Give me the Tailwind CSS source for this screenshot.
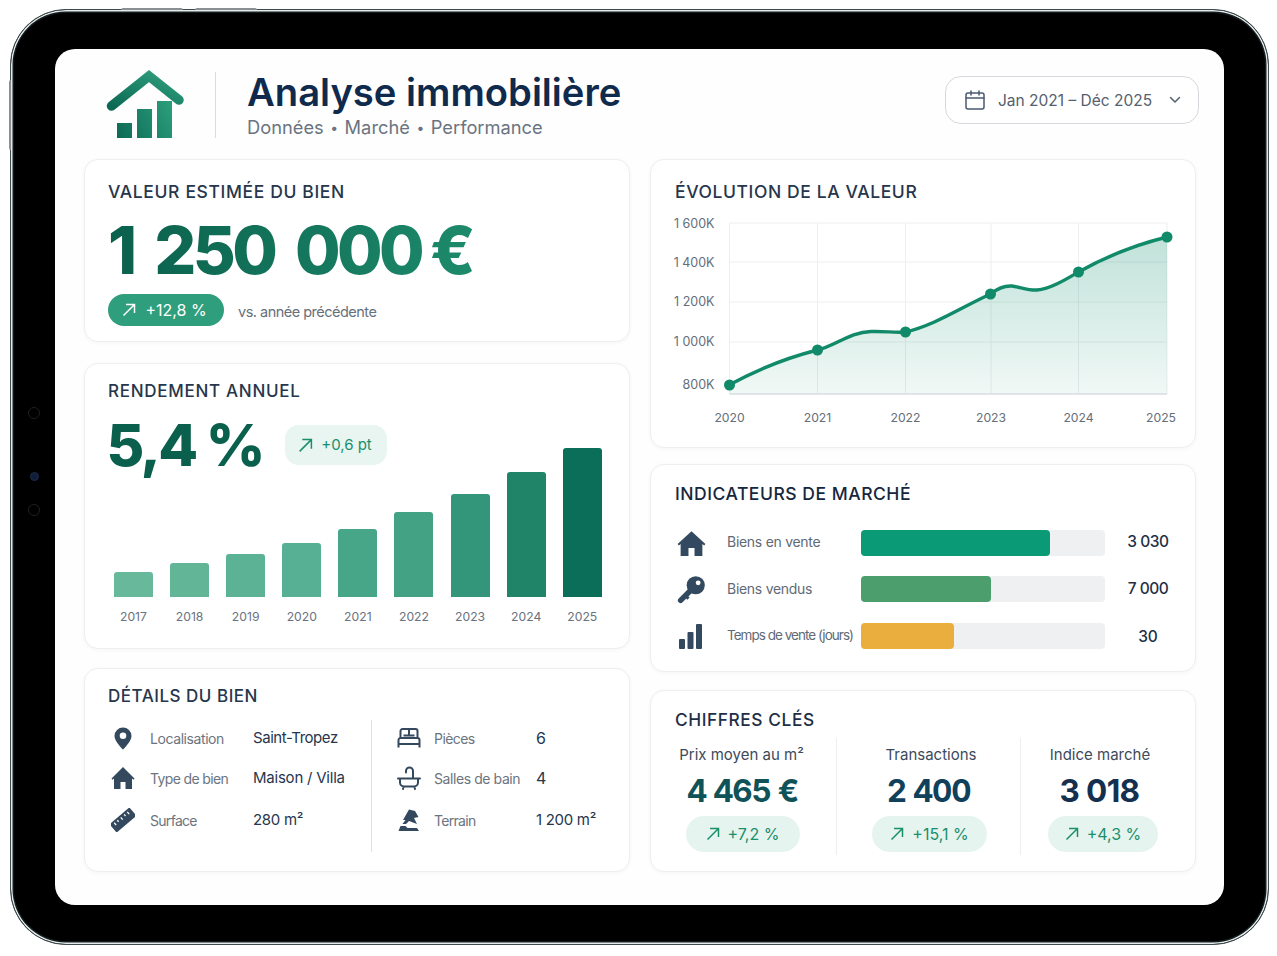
<!DOCTYPE html>
<html lang="fr">
<head>
<meta charset="utf-8">
<script src="https://cdn.jsdelivr.net/npm/@tailwindcss/browser@4"></script>
<title>Analyse immobilière</title>
</head>
<body class="bg-white font-['Inter','Liberation_Sans',sans-serif] text-[#1e2f45] antialiased">
<div class="w-[1277px] h-[956px] overflow-hidden pt-[9px] pl-[10px]">
  <div class="relative w-[1259px] h-[936px] rounded-[56px] bg-black border border-[#3d4a4e] shadow-[inset_0_0_0_1.5px_#e4eaea,inset_0_0_0_3px_#141c1e] pt-[39px] pl-[44px]">
    <div class="absolute left-[110px] -top-[2px] w-[62px] h-[2px] rounded-t bg-[#8a9092]"></div>
    <div class="absolute left-[184px] -top-[2px] w-[62px] h-[2px] rounded-t bg-[#8a9092]"></div>
    <div class="absolute -left-[2px] top-[70px] w-[2px] h-[70px] rounded-l bg-[#8a9092]"></div>
    <div class="absolute left-[17px] top-[397px] w-[12px] h-[12px] rounded-full border border-[#1c2022]"></div>
    <div class="absolute left-[19px] top-[462px] w-[9px] h-[9px] rounded-full bg-[#0f1f3a] border border-[#1c2c48]"></div>
    <div class="absolute left-[17px] top-[494px] w-[12px] h-[12px] rounded-full border border-[#1c2022]"></div>

    <div class="w-[1169px] h-[856px] rounded-[20px] bg-[#fefefe] pl-[29px]">
      <!-- En-tête -->
      <header class="flex items-start h-[110px] w-[1115px]">
        <svg class="ml-[21px] mt-[19px] shrink-0" width="80" height="72" viewBox="105 68 80 72">
          <defs>
            <linearGradient id="logoG" x1="0" y1="1" x2="1" y2="0"><stop offset="0" stop-color="#0c6a54"/><stop offset="1" stop-color="#2f9f7d"/></linearGradient>
            <linearGradient id="logoB" gradientUnits="userSpaceOnUse" x1="117" y1="138" x2="172" y2="110"><stop offset="0" stop-color="#0c6a54"/><stop offset="1" stop-color="#2a9c7a"/></linearGradient>
          </defs>
          <path d="M111.500 106 L149 76 L179 100" fill="none" stroke="url(#logoG)" stroke-width="9.500" stroke-linecap="round" stroke-linejoin="miter"/>
          <rect x="117" y="123" width="15" height="15" fill="url(#logoB)"/>
          <rect x="137" y="109" width="15" height="29" fill="url(#logoB)"/>
          <rect x="157" y="101" width="15" height="37" fill="url(#logoB)"/>
        </svg>
        <div class="ml-[30px] mt-[23px] w-px h-[66px] bg-[#d9dcdf] shrink-0"></div>
        <div class="ml-[31px] mt-[19px]">
          <h1 class="text-[38.200px] leading-[48px] font-semibold text-[#0f2a4d] whitespace-nowrap">Analyse immobilière</h1>
          <p class="-mt-[1px] text-[18.300px] leading-[24px] text-[#6a7480] whitespace-nowrap">Données<span class="mx-[6.500px] text-[14px] inline-block -translate-y-[1.500px]">•</span>Marché<span class="mx-[6.500px] text-[14px] inline-block -translate-y-[1.500px]">•</span>Performance</p>
        </div>
        <div class="ml-auto mt-[27px] w-[254px] h-[48px] rounded-[16px] border border-[#d5d9de] bg-white flex items-center pl-[19px] shrink-0">
          <svg width="20" height="20" viewBox="0 0 20 20" fill="none" stroke="#4a5a70" stroke-width="1.500" stroke-linecap="round"><rect x="1" y="3" width="18" height="16" rx="2"/><path d="M1 8h18M6 1v4M14 1v4"/></svg>
          <span class="ml-[13px] pt-[1px] text-[15.500px] text-[#55606e] whitespace-nowrap">Jan 2021 – Déc 2025</span>
          <svg class="ml-[17px]" width="12" height="8" viewBox="0 0 12 8" fill="none" stroke="#55606e" stroke-width="1.500" stroke-linecap="round" stroke-linejoin="round"><path d="M1.500 1.500 6 6l4.500-4.500"/></svg>
        </div>
      </header>

      <div class="flex gap-[20px] items-start">
        <!-- Colonne gauche -->
        <div class="w-[546px] flex flex-col">
          <section class="h-[183px] rounded-[14px] border border-[#eceef1] shadow-[0_1px_4px_rgba(30,50,70,0.04)] bg-white pl-[23px] pt-[21px]">
            <h2 class="h-[22px] text-[17.500px] leading-[22px] font-medium tracking-[0.036em] text-[#26364c]">VALEUR ESTIMÉE DU BIEN</h2>
            <div class="mt-[11px] h-[72px] w-fit text-[66px] leading-[72px] font-extrabold tracking-[-0.055em] [word-spacing:10px] whitespace-nowrap bg-linear-to-r from-[#0a604c] to-[#1d8a6b] bg-clip-text text-transparent">1 250 000<span class="[word-spacing:-2px]"> €</span></div>
            <div class="mt-[8px] flex items-center">
              <span class="h-[32px] w-[116px] rounded-full bg-[#2f9e7c] text-white text-[16px] pr-[3px] flex items-center justify-center gap-[9px]">
                <svg width="14" height="14" viewBox="0 0 14 14" fill="none" stroke="currentColor" stroke-width="1.500"><path d="M1.500 12.500 12 2M4 1.500h8.500V10"/></svg>
                +12,8 %
              </span>
              <span class="ml-[14px] pt-[3px] text-[14.500px] tracking-[-0.035em] text-[#66707c]">vs. année précédente</span>
            </div>
          </section>

          <section class="mt-[21px] h-[286px] rounded-[14px] border border-[#eceef1] shadow-[0_1px_4px_rgba(30,50,70,0.04)] bg-white pl-[23px] pt-[16px]">
            <h2 class="h-[22px] text-[17px] leading-[22px] font-medium tracking-[0.042em] text-[#26364c]">RENDEMENT ANNUEL</h2>
            <div class="mt-[13px] h-[60px] flex items-center">
              <span class="-ml-[1.500px] w-[178.500px] text-[58px] leading-[60px] font-extrabold tracking-[-0.045em] whitespace-nowrap text-[#0a604c]">5,4 %</span>
              <span class="h-[40px] w-[102px] rounded-[14px] bg-[#e8f5f0] text-[#1a8f6c] text-[15px] pr-[2px] flex items-center justify-center gap-[8px]">
                <svg width="15" height="15" viewBox="0 0 14 14" fill="none" stroke="currentColor" stroke-width="1.400"><path d="M1.500 12.500 12 2M4 1.500h8.500V10"/></svg>
                +0,6 pt
              </span>
            </div>
            <div class="-mt-[27px] ml-[6px] flex gap-[17.100px]">
              <div class="w-[39px]"><div class="h-[149px] flex items-end"><div class="w-full h-[25px] rounded-t-[3px] bg-[#68b99c]"></div></div><p class="mt-[10px] h-[20px] text-[12.200px] leading-[20px] text-center text-[#69727e]">2017</p></div>
              <div class="w-[39px]"><div class="h-[149px] flex items-end"><div class="w-full h-[34px] rounded-t-[3px] bg-[#62b597]"></div></div><p class="mt-[10px] h-[20px] text-[12.200px] leading-[20px] text-center text-[#69727e]">2018</p></div>
              <div class="w-[39px]"><div class="h-[149px] flex items-end"><div class="w-full h-[43px] rounded-t-[3px] bg-[#5cb295]"></div></div><p class="mt-[10px] h-[20px] text-[12.200px] leading-[20px] text-center text-[#69727e]">2019</p></div>
              <div class="w-[39px]"><div class="h-[149px] flex items-end"><div class="w-full h-[54px] rounded-t-[3px] bg-[#57b094]"></div></div><p class="mt-[10px] h-[20px] text-[12.200px] leading-[20px] text-center text-[#69727e]">2020</p></div>
              <div class="w-[39px]"><div class="h-[149px] flex items-end"><div class="w-full h-[68px] rounded-t-[3px] bg-[#48a688]"></div></div><p class="mt-[10px] h-[20px] text-[12.200px] leading-[20px] text-center text-[#69727e]">2021</p></div>
              <div class="w-[39px]"><div class="h-[149px] flex items-end"><div class="w-full h-[85px] rounded-t-[3px] bg-[#42a283]"></div></div><p class="mt-[10px] h-[20px] text-[12.200px] leading-[20px] text-center text-[#69727e]">2022</p></div>
              <div class="w-[39px]"><div class="h-[149px] flex items-end"><div class="w-full h-[103px] rounded-t-[3px] bg-[#33957a]"></div></div><p class="mt-[10px] h-[20px] text-[12.200px] leading-[20px] text-center text-[#69727e]">2023</p></div>
              <div class="w-[39px]"><div class="h-[149px] flex items-end"><div class="w-full h-[125px] rounded-t-[3px] bg-[#1f8468]"></div></div><p class="mt-[10px] h-[20px] text-[12.200px] leading-[20px] text-center text-[#69727e]">2024</p></div>
              <div class="w-[39px]"><div class="h-[149px] flex items-end"><div class="w-full h-[149px] rounded-t-[3px] bg-[#0a6e58]"></div></div><p class="mt-[10px] h-[20px] text-[12.200px] leading-[20px] text-center text-[#69727e]">2025</p></div>
            </div>
          </section>

          <section class="mt-[19px] h-[204px] rounded-[14px] border border-[#eceef1] shadow-[0_1px_4px_rgba(30,50,70,0.04)] bg-white pl-[23px] pt-[16px]">
            <h2 class="h-[22px] text-[17px] leading-[22px] font-medium tracking-[0.03em] text-[#26364c]">DÉTAILS DU BIEN</h2>
            <div class="mt-[13px] flex">
              <div class="w-[264px] h-[132px] border-r border-[#dfe2e5] pl-[3px] -mb-[2px]">
                <div class="h-[40px] -mt-[2px] flex items-center">
                  <svg class="w-[24px] shrink-0" width="24" height="24" viewBox="0 0 24 24"><path fill="#34495e" d="M12 1.500a8.500 8.500 0 0 0-8.500 8.500c0 5.500 8.500 13.500 8.500 13.500s8.500-8 8.500-13.500A8.500 8.500 0 0 0 12 1.500z"/><circle cx="12" cy="9.800" r="3.300" fill="#fff"/></svg>
                  <span class="ml-[15px] w-[103px] text-[14px] tracking-[-0.03em] text-[#6b7480] whitespace-nowrap">Localisation</span>
                  <span class="text-[15px] tracking-[-0.03em] text-[#26364c] whitespace-nowrap">Saint-Tropez</span>
                </div>
                <div class="h-[40px] flex items-center">
                  <svg class="w-[24px] shrink-0" width="24" height="24" viewBox="0 0 24 24"><path fill="#34495e" d="M12 1 0.500 12.500l1 1.200L3 12.500V23h6.500v-7h5v7H21V12.500l1.500 1.200 1-1.200z"/></svg>
                  <span class="ml-[15px] w-[103px] text-[14px] tracking-[-0.045em] text-[#6b7480] whitespace-nowrap">Type de bien</span>
                  <span class="text-[15px] tracking-[-0.015em] text-[#26364c] whitespace-nowrap">Maison / Villa</span>
                </div>
                <div class="mt-[2px] h-[40px] flex items-center">
                  <svg class="w-[24px] shrink-0" width="24" height="24" viewBox="0 0 24 24"><g transform="rotate(-40 12 12)"><rect x="-1" y="6.500" width="26" height="11" rx="1" fill="#34495e"/><path d="M3.500 8.500v3M7.500 8.500v2M12 8.500v3M16.500 8.500v2M20.500 8.500v3" stroke="#fff" stroke-width="1.300"/></g></svg>
                  <span class="ml-[15px] w-[103px] text-[14px] tracking-[-0.05em] text-[#6b7480] whitespace-nowrap">Surface</span>
                  <span class="text-[15px] tracking-[-0.02em] text-[#26364c] whitespace-nowrap">280 m²</span>
                </div>
              </div>
              <div class="pl-[25px]">
                <div class="h-[40px] -mt-[2px] flex items-center">
                  <svg class="w-[24px] shrink-0" width="24" height="24" viewBox="0 0 24 24" fill="none" stroke="#34495e" stroke-width="2"><path d="M3.500 12V5a2 2 0 0 1 2-2h13a2 2 0 0 1 2 2V12M12 3V9.500M6.500 9.500h11M1.500 21.500V14a2 2 0 0 1 2-2h17a2 2 0 0 1 2 2v7.500M1.500 18h21"/></svg>
                  <span class="ml-[13px] w-[102px] text-[14px] tracking-[-0.04em] text-[#6b7480] whitespace-nowrap">Pièces</span>
                  <span class="text-[16px] text-[#26364c]">6</span>
                </div>
                <div class="h-[40px] flex items-center">
                  <svg class="w-[24px] shrink-0" width="24" height="24" viewBox="0 0 24 24" fill="none" stroke="#34495e" stroke-width="2" stroke-linecap="round"><path d="M1 12.500h22M3 12.500v4a4 4 0 0 0 4 4h10a4 4 0 0 0 4-4v-4M6.500 20.500 6 23M17.500 20.500l.5 2.500M9 6.500V5a3.500 3.500 0 0 1 7 0v7.500"/></svg>
                  <span class="ml-[13px] w-[102px] text-[14px] tracking-[-0.03em] text-[#6b7480] whitespace-nowrap">Salles de bain</span>
                  <span class="text-[16px] text-[#26364c]">4</span>
                </div>
                <div class="mt-[2px] h-[40px] flex items-center">
                  <svg class="w-[24px] shrink-0" width="24" height="24" viewBox="0 0 24 24"><path fill="#34495e" d="M12 1.500 18 3l3.500 6-4.500 1 3 6-8-3-3 3H5.500L8.500 12 6 12z"/><path fill="#34495e" d="M3.500 18h5l2 2h9.500l2 3H1.500z"/></svg>
                  <span class="ml-[13px] w-[102px] text-[14px] tracking-[-0.05em] text-[#6b7480] whitespace-nowrap">Terrain</span>
                  <span class="text-[15px] tracking-[-0.02em] text-[#26364c] whitespace-nowrap">1 200 m²</span>
                </div>
              </div>
            </div>
          </section>
        </div>

        <!-- Colonne droite -->
        <div class="w-[546px] flex flex-col">
          <section class="h-[289px] rounded-[14px] border border-[#eceef1] shadow-[0_1px_4px_rgba(30,50,70,0.04)] bg-white pl-[24px] pt-[21px]">
            <h2 class="h-[22px] text-[17.500px] leading-[22px] font-medium tracking-[0.034em] text-[#26364c]">ÉVOLUTION DE LA VALEUR</h2>
            <svg class="mt-[7px] -ml-[5px] block" width="515" height="220" viewBox="670 210 515 220" font-family="Inter, Liberation Sans, sans-serif">
              <defs><linearGradient id="area" x1="0" y1="0" x2="0" y2="1"><stop offset="0" stop-color="#0f8f6c" stop-opacity="0.26"/><stop offset="1" stop-color="#0f8f6c" stop-opacity="0.06"/></linearGradient></defs>
              <g stroke="#eceef0" stroke-width="1" fill="none">
                <path d="M729.500 223H1167M729.500 262H1167M729.500 302H1167M729.500 342H1167"/>
                <path d="M729.500 223V394M817.500 223V394M905.500 223V394M991 223V394M1078.500 223V394M1167 223V394"/>
              </g>
              <path d="M729 385C760 368 790 357 817.500 350C835 346 850 332 871 331.500C885 331 895 333 905.500 332C935 325 960 308 990.500 294C998 288 1005 285.500 1012 286C1020 287 1028 290.500 1037 290C1050 289 1065 280 1078.500 272C1105 257 1135 245 1167 237V394H729Z" fill="url(#area)"/>
              <path d="M729.500 394H1167" stroke="#d9dde1" stroke-width="1.500"/>
              <path d="M729 385C760 368 790 357 817.500 350C835 346 850 332 871 331.500C885 331 895 333 905.500 332C935 325 960 308 990.500 294C998 288 1005 285.500 1012 286C1020 287 1028 290.500 1037 290C1050 289 1065 280 1078.500 272C1105 257 1135 245 1167 237" fill="none" stroke="#118a69" stroke-width="3.400" stroke-linecap="round"/>
              <g fill="#118a69">
                <circle cx="729.500" cy="385" r="5.500"/><circle cx="817.500" cy="350" r="5.500"/><circle cx="905.500" cy="332" r="5.500"/><circle cx="990.500" cy="294" r="5.500"/><circle cx="1078.500" cy="272" r="5.500"/><circle cx="1167" cy="237" r="5.500"/>
              </g>
              <g fill="#646e7a" font-size="12.500" text-anchor="end">
                <text x="714.500" y="227.500">1 600K</text><text x="714.500" y="266.500">1 400K</text><text x="714.500" y="306">1 200K</text><text x="714.500" y="346">1 000K</text><text x="714.500" y="389">800K</text>
              </g>
              <g fill="#646e7a" font-size="12.200" text-anchor="middle">
                <text x="729.500" y="422">2020</text><text x="817.500" y="422">2021</text><text x="905.500" y="422">2022</text><text x="991" y="422">2023</text><text x="1078.500" y="422">2024</text><text x="1161" y="422">2025</text>
              </g>
            </svg>
          </section>

          <section class="mt-[16px] h-[208px] rounded-[14px] border border-[#eceef1] shadow-[0_1px_4px_rgba(30,50,70,0.04)] bg-white pl-[24px] pt-[18px]">
            <h2 class="h-[22px] text-[17.500px] leading-[22px] font-medium tracking-[0.03em] text-[#15263d]">INDICATEURS DE MARCHÉ</h2>
            <div class="mt-[25px] flex flex-col">
              <div class="h-[26px] flex items-center">
                <svg class="ml-[2px] shrink-0" width="29" height="27" viewBox="0 0 24 24" preserveAspectRatio="none"><path fill="#33495f" d="M12 1 0.500 12.500l1 1.200L3 12.500V23h6.500v-7h5v7H21V12.500l1.500 1.200 1-1.200z"/></svg>
                <span class="ml-[21px] w-[134px] pb-[3px] text-[14px] tracking-[-0.02em] text-[#5f6a76] whitespace-nowrap">Biens en vente</span>
                <div class="w-[244px] h-[26px] rounded-[4px] bg-[#eef0f2]"><div class="w-[189px] h-full rounded-[4px] bg-[#0a9a76]"></div></div>
                <span class="w-[86px] pb-[3px] text-center text-[15.500px] font-medium text-[#1e2f45] tracking-[-0.03em]">3 030</span>
              </div>
              <div class="mt-[20px] h-[26px] flex items-center">
                <svg class="ml-[2px] shrink-0" width="29" height="29" viewBox="0 0 24 24"><circle cx="15.500" cy="8.500" r="7.500" fill="#33495f"/><circle cx="17.500" cy="6.500" r="2" fill="#fff"/><path d="M11 13 3 21" stroke="#33495f" stroke-width="4.500" stroke-linecap="round"/><path d="M7 17l2.500 2.500" stroke="#33495f" stroke-width="2.500"/></svg>
                <span class="ml-[21px] w-[134px] pb-[2px] text-[14px] tracking-[-0.02em] text-[#5f6a76] whitespace-nowrap">Biens vendus</span>
                <div class="w-[244px] h-[26px] rounded-[4px] bg-[#eef0f2]"><div class="w-[130px] h-full rounded-[4px] bg-[#4c9f6d]"></div></div>
                <span class="w-[86px] text-center text-[15.500px] font-medium text-[#1e2f45] tracking-[-0.03em]">7 000</span>
              </div>
              <div class="mt-[21px] h-[26px] flex items-center">
                <svg class="ml-[4px] mr-[4px] shrink-0" width="23" height="25" viewBox="0 0 23 25"><rect x="0" y="15" width="6" height="10" rx="1" fill="#33495f"/><rect x="8.500" y="8" width="6" height="17" rx="1" fill="#33495f"/><rect x="17" y="0" width="6" height="25" rx="1" fill="#33495f"/></svg>
                <span class="ml-[21px] w-[134px] pb-[1px] text-[13.500px] tracking-[-0.072em] text-[#5f6a76] whitespace-nowrap">Temps de vente (jours)</span>
                <div class="w-[244px] h-[26px] rounded-[4px] bg-[#eef0f2]"><div class="w-[93px] h-full rounded-[4px] bg-[#e9ae3d]"></div></div>
                <span class="w-[86px] pt-[1px] text-center text-[15.500px] font-medium text-[#1e2f45]">30</span>
              </div>
            </div>
          </section>

          <section class="mt-[18px] h-[182px] rounded-[14px] border border-[#eceef1] shadow-[0_1px_4px_rgba(30,50,70,0.04)] bg-white pl-[24px] pt-[18px]">
            <h2 class="h-[22px] text-[17.300px] leading-[22px] font-medium tracking-[0.034em] text-[#1e2f45]">CHIFFRES CLÉS</h2>
            <div class="mt-[7px] flex h-[117px]">
              <div class="w-[162px] pr-[28px] border-r border-[#eceef1] flex flex-col items-center pt-[7px]">
                <p class="h-[20px] text-[15px] leading-[20px] text-[#3d4a5a] whitespace-nowrap">Prix moyen au m²</p>
                <p class="mt-[6px] ml-[2px] h-[40px] text-[31.500px] leading-[40px] font-bold tabular-nums tracking-[-0.04em] text-[#0f5257] whitespace-nowrap">4 465 €</p>
                <span class="mt-[5px] ml-[2px] h-[36px] w-[114px] rounded-full bg-[#e6f4ef] text-[#1a8f6c] text-[16px] flex items-center justify-center gap-[8px]"><svg width="14" height="14" viewBox="0 0 14 14" fill="none" stroke="currentColor" stroke-width="1.500"><path d="M1.500 12.500 12 2M4 1.500h8.500V10"/></svg>+7,2 %</span>
              </div>
              <div class="w-[184px] border-r border-[#eceef1] flex flex-col items-center pt-[7px]">
                <p class="ml-[5px] h-[20px] text-[15px] leading-[20px] text-[#3d4a5a] whitespace-nowrap">Transactions</p>
                <p class="mt-[6px] h-[40px] text-[31.500px] leading-[40px] font-bold tabular-nums tracking-[-0.04em] text-[#10405a] whitespace-nowrap">2 400</p>
                <span class="mt-[5px] ml-[2px] h-[36px] w-[115px] rounded-full bg-[#e6f4ef] text-[#1a8f6c] text-[16px] flex items-center justify-center gap-[8px]"><svg width="14" height="14" viewBox="0 0 14 14" fill="none" stroke="currentColor" stroke-width="1.500"><path d="M1.500 12.500 12 2M4 1.500h8.500V10"/></svg>+15,1 %</span>
              </div>
              <div class="w-[160px] flex flex-col items-center pt-[7px]">
                <p class="-ml-[2px] h-[20px] text-[15px] leading-[20px] text-[#3d4a5a] whitespace-nowrap">Indice marché</p>
                <p class="mt-[6px] -ml-[3px] h-[40px] text-[31.500px] leading-[40px] font-bold tracking-[-0.02em] text-[#15304f] whitespace-nowrap">3 018</p>
                <span class="mt-[5px] ml-[4px] h-[36px] w-[110px] rounded-full bg-[#e6f4ef] text-[#1a8f6c] text-[16px] flex items-center justify-center gap-[8px]"><svg width="14" height="14" viewBox="0 0 14 14" fill="none" stroke="currentColor" stroke-width="1.500"><path d="M1.500 12.500 12 2M4 1.500h8.500V10"/></svg>+4,3 %</span>
              </div>
            </div>
          </section>
        </div>
      </div>
    </div>
  </div>
</div>
</body>
</html>
